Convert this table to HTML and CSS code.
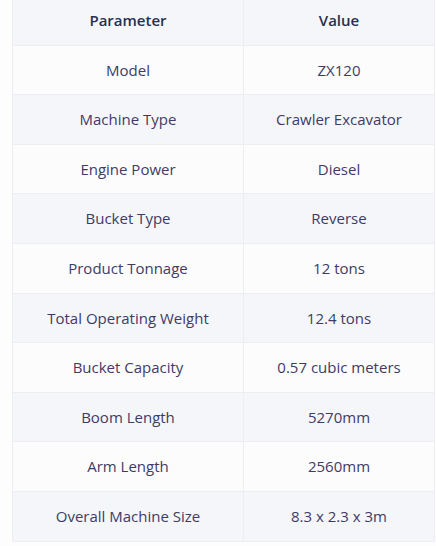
FILE: index.html
```html
<!DOCTYPE html>
<html>
<head>
<meta charset="utf-8">
<link rel="stylesheet" href="styles.css">
</head>
<body>
<div class="wrap">
<table class="spec">
<colgroup><col class="c-param"><col class="c-value"></colgroup>
<thead>
<tr><th>Parameter</th><th>Value</th></tr>
</thead>
<tbody>
<tr><td>Model</td><td>ZX120</td></tr>
<tr><td>Machine Type</td><td>Crawler Excavator</td></tr>
<tr><td>Engine Power</td><td>Diesel</td></tr>
<tr><td>Bucket Type</td><td>Reverse</td></tr>
<tr><td>Product Tonnage</td><td>12 tons</td></tr>
<tr><td>Total Operating Weight</td><td>12.4 tons</td></tr>
<tr><td>Bucket Capacity</td><td>0.57 cubic meters</td></tr>
<tr><td>Boom Length</td><td>5270mm</td></tr>
<tr><td>Arm Length</td><td>2560mm</td></tr>
<tr><td>Overall Machine Size</td><td>8.3 x 2.3 x 3m</td></tr>
</tbody>
</table>
</div>
</body>
</html>
```
FILE: styles.css
```css
html, body {
  margin: 0;
  padding: 0;
  background: #fdfdfd;
}
.wrap {
  padding: 0 1px 0 12px;
  margin-top: -4px;
}
.spec {
  width: 100%;
  table-layout: fixed;
  border-collapse: collapse;
  font-family: "Open Sans", "Noto Sans", sans-serif;
  font-size: 15px;
  border-left: 1px solid #eceef2;
  border-right: 1px solid #eceef2;
}
.c-param { width: 231px; }
.spec th, .spec td {
  text-align: center;
  padding: 15px 6px;
  line-height: 18.6px;
  border-bottom: 1px solid #eceef2;
}
.spec th + th, .spec td + td {
  border-left: 1px solid #eceef2;
}
.spec th {
  background: #f5f6fa;
  color: #26304f;
  font-weight: 600;
}
.spec td {
  color: #403b66;
  background: #fcfcfd;
}
.spec tbody tr:nth-child(even) td {
  background: #f5f6fa;
}
```
